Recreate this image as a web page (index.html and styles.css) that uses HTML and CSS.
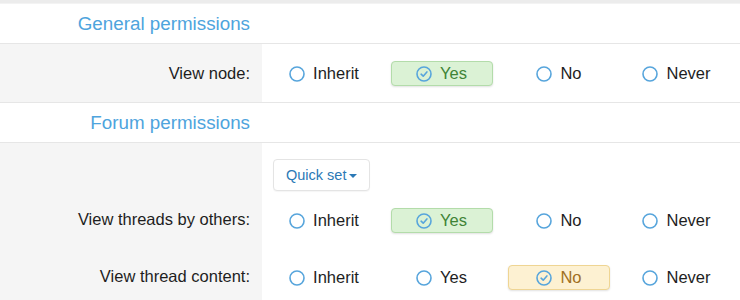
FILE: index.html
```html
<!DOCTYPE html>
<html>
<head>
<meta charset="utf-8">
<link rel="stylesheet" href="styles.css">
</head>
<body>
<div class="topbar"></div>

<div class="sec-head"><h3 class="sec-title">General permissions</h3></div>
<div class="perm-row first">
  <div class="label-cell"><span>View node:</span></div>
  <div class="ctrl-cell">
    <div class="opts">
      <label class="opt"><svg class="ico" viewBox="0 0 16 16"><circle cx="8" cy="8" r="7"/></svg><span>Inherit</span></label>
      <label class="opt sel-yes"><svg class="ico" viewBox="0 0 16 16"><circle cx="8" cy="8" r="7"/><path d="M5.1 8.2 L7.2 10.2 L10.9 5.9"/></svg><span>Yes</span></label>
      <label class="opt"><svg class="ico" viewBox="0 0 16 16"><circle cx="8" cy="8" r="7"/></svg><span>No</span></label>
      <label class="opt"><svg class="ico" viewBox="0 0 16 16"><circle cx="8" cy="8" r="7"/></svg><span>Never</span></label>
    </div>
  </div>
</div>

<div class="sec-head"><h3 class="sec-title">Forum permissions</h3></div>
<div class="section">
  <div class="quick-row">
    <div class="label-cell"></div>
    <div class="ctrl-cell quick-cell">
      <button class="quick">Quick set<span class="caret"></span></button>
    </div>
  </div>
  <div class="perm-row">
    <div class="label-cell"><span>View threads by others:</span></div>
    <div class="ctrl-cell">
      <div class="opts">
        <label class="opt"><svg class="ico" viewBox="0 0 16 16"><circle cx="8" cy="8" r="7"/></svg><span>Inherit</span></label>
        <label class="opt sel-yes"><svg class="ico" viewBox="0 0 16 16"><circle cx="8" cy="8" r="7"/><path d="M5.1 8.2 L7.2 10.2 L10.9 5.9"/></svg><span>Yes</span></label>
        <label class="opt"><svg class="ico" viewBox="0 0 16 16"><circle cx="8" cy="8" r="7"/></svg><span>No</span></label>
        <label class="opt"><svg class="ico" viewBox="0 0 16 16"><circle cx="8" cy="8" r="7"/></svg><span>Never</span></label>
      </div>
    </div>
  </div>
  <div class="perm-row">
    <div class="label-cell"><span>View thread content:</span></div>
    <div class="ctrl-cell">
      <div class="opts">
        <label class="opt"><svg class="ico" viewBox="0 0 16 16"><circle cx="8" cy="8" r="7"/></svg><span>Inherit</span></label>
        <label class="opt"><svg class="ico" viewBox="0 0 16 16"><circle cx="8" cy="8" r="7"/></svg><span>Yes</span></label>
        <label class="opt sel-no"><svg class="ico" viewBox="0 0 16 16"><circle cx="8" cy="8" r="7"/><path d="M5.1 8.2 L7.2 10.2 L10.9 5.9"/></svg><span>No</span></label>
        <label class="opt"><svg class="ico" viewBox="0 0 16 16"><circle cx="8" cy="8" r="7"/></svg><span>Never</span></label>
      </div>
    </div>
  </div>
</div>
</body>
</html>
```

FILE: styles.css
```css
html, body {
  margin: 0;
  padding: 0;
  background: #ffffff;
  font-family: "Liberation Sans", Arial, Helvetica, sans-serif;
  color: #1e1e1e;
  overflow: hidden;
}

.topbar {
  height: 3px;
  background: #ececec;
  border-bottom: 1px solid #f3f3f3;
}

.sec-head {
  height: 39px;
  box-sizing: border-box;
  padding-top: 2px;
  display: flex;
  align-items: center;
  border-bottom: 1px solid #e6e6e6;
  height: 40px;
}

.sec-title {
  margin: 0;
  width: 250px;
  text-align: right;
  font-size: 18.8px;
  font-weight: normal;
  color: #4ea4dd;
  line-height: 1;
}

.perm-row,
.quick-row {
  display: grid;
  grid-template-columns: 262px 1fr;
}

.perm-row.first {
  border-bottom: 1px solid #e6e6e6;
}

.label-cell {
  background: #f5f5f5;
  display: flex;
  align-items: center;
  justify-content: flex-end;
  padding-right: 12px;
  font-size: 16.5px;
  color: #1e1e1e;
}

.ctrl-cell {
  padding: 17px 10px 15px 11px;
}

.first .ctrl-cell {
  padding-bottom: 16px;
}

.quick-cell {
  padding: 16px 10px 0 11px;
  height: 32px;
}

.opts {
  display: flex;
  gap: 15.5px;
}

.opt {
  width: 102px;
  height: 25px;
  box-sizing: border-box;
  border: 1px solid transparent;
  border-radius: 4px;
  display: flex;
  align-items: center;
  justify-content: center;
  gap: 8px;
  font-size: 16.5px;
  color: #1e1e1e;
}

.ico {
  width: 16px;
  height: 16px;
  fill: none;
  stroke: #57a5dc;
  stroke-width: 1.6;
  stroke-linecap: round;
  stroke-linejoin: round;
  flex: none;
}

.sel-yes {
  background: #dbf2d5;
  border-color: #b3dcaa;
  color: #3f8437;
  box-shadow: 0 1px 2px rgba(0, 0, 0, 0.12);
}

.sel-no {
  background: #fdf1d2;
  border-color: #efd593;
  color: #a06f22;
  box-shadow: 0 1px 2px rgba(0, 0, 0, 0.12);
}

.quick {
  height: 32px;
  box-sizing: border-box;
  width: 97px;
  padding: 0 0 0 12px;
  border: 1px solid #e4e4e4;
  border-radius: 4px;
  background: #ffffff;
  color: #2b79b6;
  font-family: "Liberation Sans", Arial, sans-serif;
  font-size: 14.5px;
  display: flex;
  align-items: center;
  box-shadow: 0 1px 1px rgba(0, 0, 0, 0.04);
}

.caret {
  display: inline-block;
  width: 0;
  height: 0;
  margin-left: 3px;
  margin-top: 1px;
  border-left: 4px solid transparent;
  border-right: 4px solid transparent;
  border-top: 4px solid #2b79b6;
}
```
